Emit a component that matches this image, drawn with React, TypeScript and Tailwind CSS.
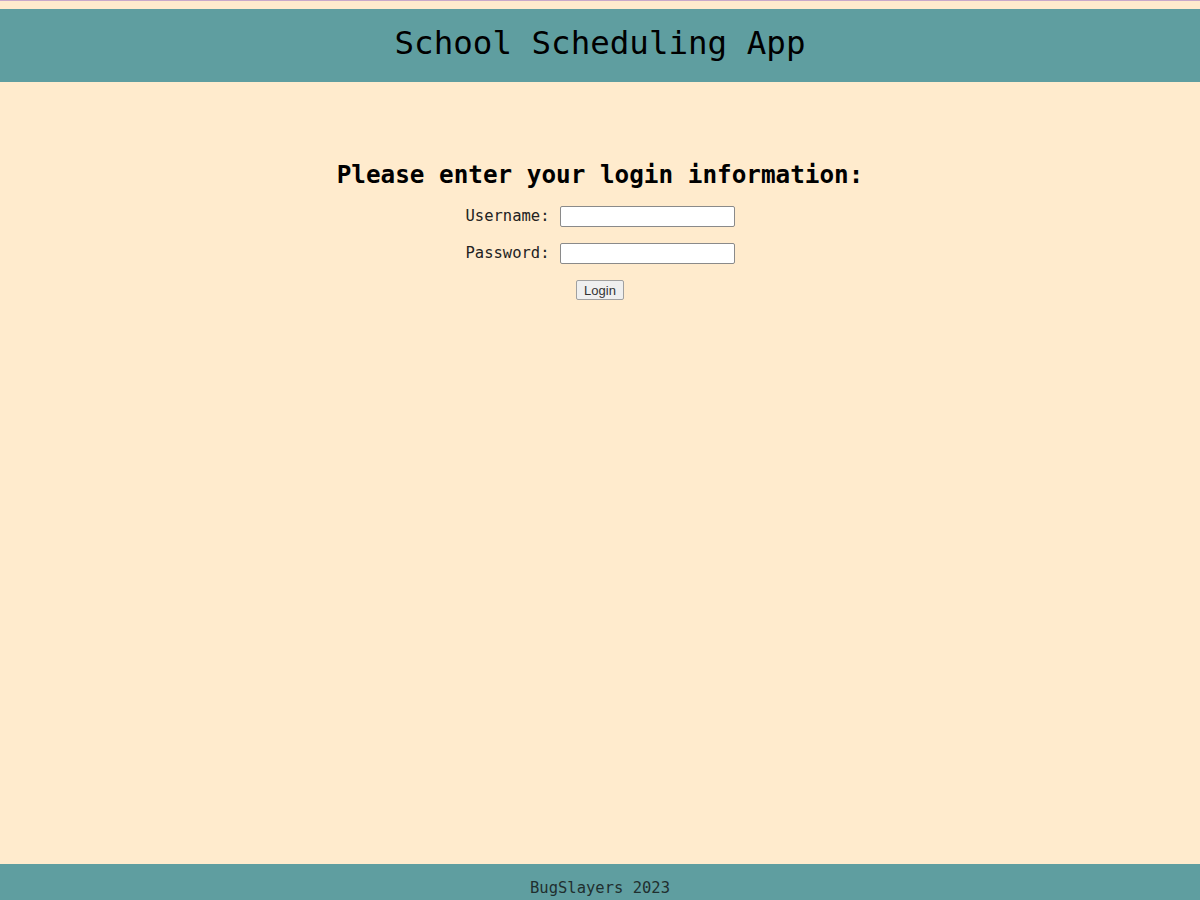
export default function App() {
  return (
    <div className="flex flex-col h-[900px] bg-[#ffebcd] border-t border-[#c9a9c9] font-['DejaVu_Sans_Mono',monospace] text-black">
      <header className="mt-[8px] h-[73px] bg-[#5f9ea0] flex items-center justify-center pb-[4px]">
        <h1 className="text-[32.5px] leading-none">School Scheduling App</h1>
      </header>

      <main className="flex-1 flex flex-col items-center pt-[78px]">
        <h2 className="text-[24.3px] font-bold leading-[30px]">Please enter your login information:</h2>

        <form className="mt-[16px] flex flex-col items-center" onSubmit={(e) => e.preventDefault()}>
          <div className="flex items-center gap-[10px] h-[21px]">
            <label htmlFor="username" className="text-[15.5px] text-[#222]">Username:</label>
            <input
              id="username"
              type="text"
              className="w-[175px] h-[21px] bg-white border border-[#8a8a8a] rounded-[2px]"
            />
          </div>
          <div className="flex items-center gap-[10px] h-[21px] mt-[16px]">
            <label htmlFor="password" className="text-[15.5px] text-[#222]">Password:</label>
            <input
              id="password"
              type="password"
              className="w-[175px] h-[21px] bg-white border border-[#8a8a8a] rounded-[2px]"
            />
          </div>
          <button
            type="submit"
            className="mt-[16px] w-[48px] h-[20px] bg-[#efefef] border border-[#a0a0a0] rounded-[2px] text-[13px] text-[#333] font-['Liberation_Sans',Arial,sans-serif] leading-none"
          >
            Login
          </button>
        </form>
      </main>

      <footer className="h-[36px] bg-[#5f9ea0] flex items-center justify-center pt-[14px]">
        <p className="text-[15.5px] text-[#1f2f2f]">BugSlayers 2023</p>
      </footer>
    </div>
  )
}
